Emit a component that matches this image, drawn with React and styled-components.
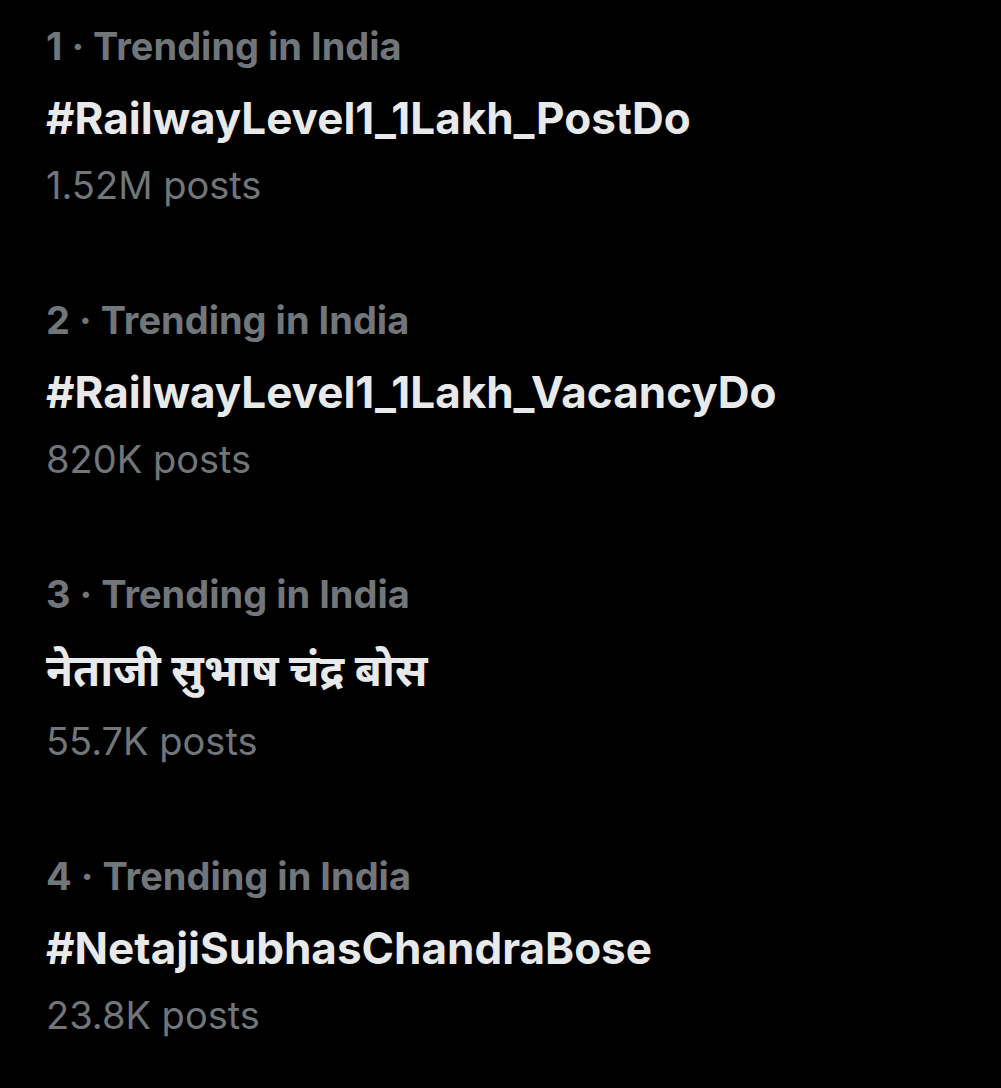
import React from "react";
import styled, { createGlobalStyle } from "styled-components";

const GlobalStyle = createGlobalStyle`
  html, body {
    margin: 0;
    padding: 0;
    background: #000000;
  }
  body {
    font-family: Inter, "Noto Sans", "Noto Sans Devanagari", "Liberation Sans", sans-serif;
  }
`;

const trends = [
  { rank: 1, title: "#RailwayLevel1_1Lakh_PostDo", posts: "1.52M posts" },
  { rank: 2, title: "#RailwayLevel1_1Lakh_VacancyDo", posts: "820K posts" },
  { rank: 3, title: "नेताजी सुभाष चंद्र बोस", posts: "55.7K posts", tall: true },
  { rank: 4, title: "#NetajiSubhasChandraBose", posts: "23.8K posts" },
];

const List = styled.div`
  display: flex;
  flex-direction: column;
  width: 1001px;
  min-height: 1088px;
  background: #000000;
`;

const Item = styled.div`
  display: flex;
  flex-direction: column;
  padding: 11px 46px 59px;
`;

const Meta = styled.div`
  font-size: 38px;
  line-height: 70px;
  font-weight: 700;
  color: #71767b;
`;

const Title = styled.div`
  font-size: 44px;
  line-height: ${(p) => (p.$tall ? "82px" : "74px")};
  font-weight: 700;
  color: #e7e9ea;
  white-space: nowrap;
`;

const Count = styled.div`
  font-size: 38px;
  line-height: 60px;
  font-weight: 400;
  color: #71767b;
`;

export default function App() {
  return (
    <>
      <GlobalStyle />
      <List>
        {trends.map((t) => (
          <Item key={t.rank}>
            <Meta>{t.rank} · Trending in India</Meta>
            <Title $tall={t.tall}>{t.title}</Title>
            <Count>{t.posts}</Count>
          </Item>
        ))}
      </List>
    </>
  );
}
